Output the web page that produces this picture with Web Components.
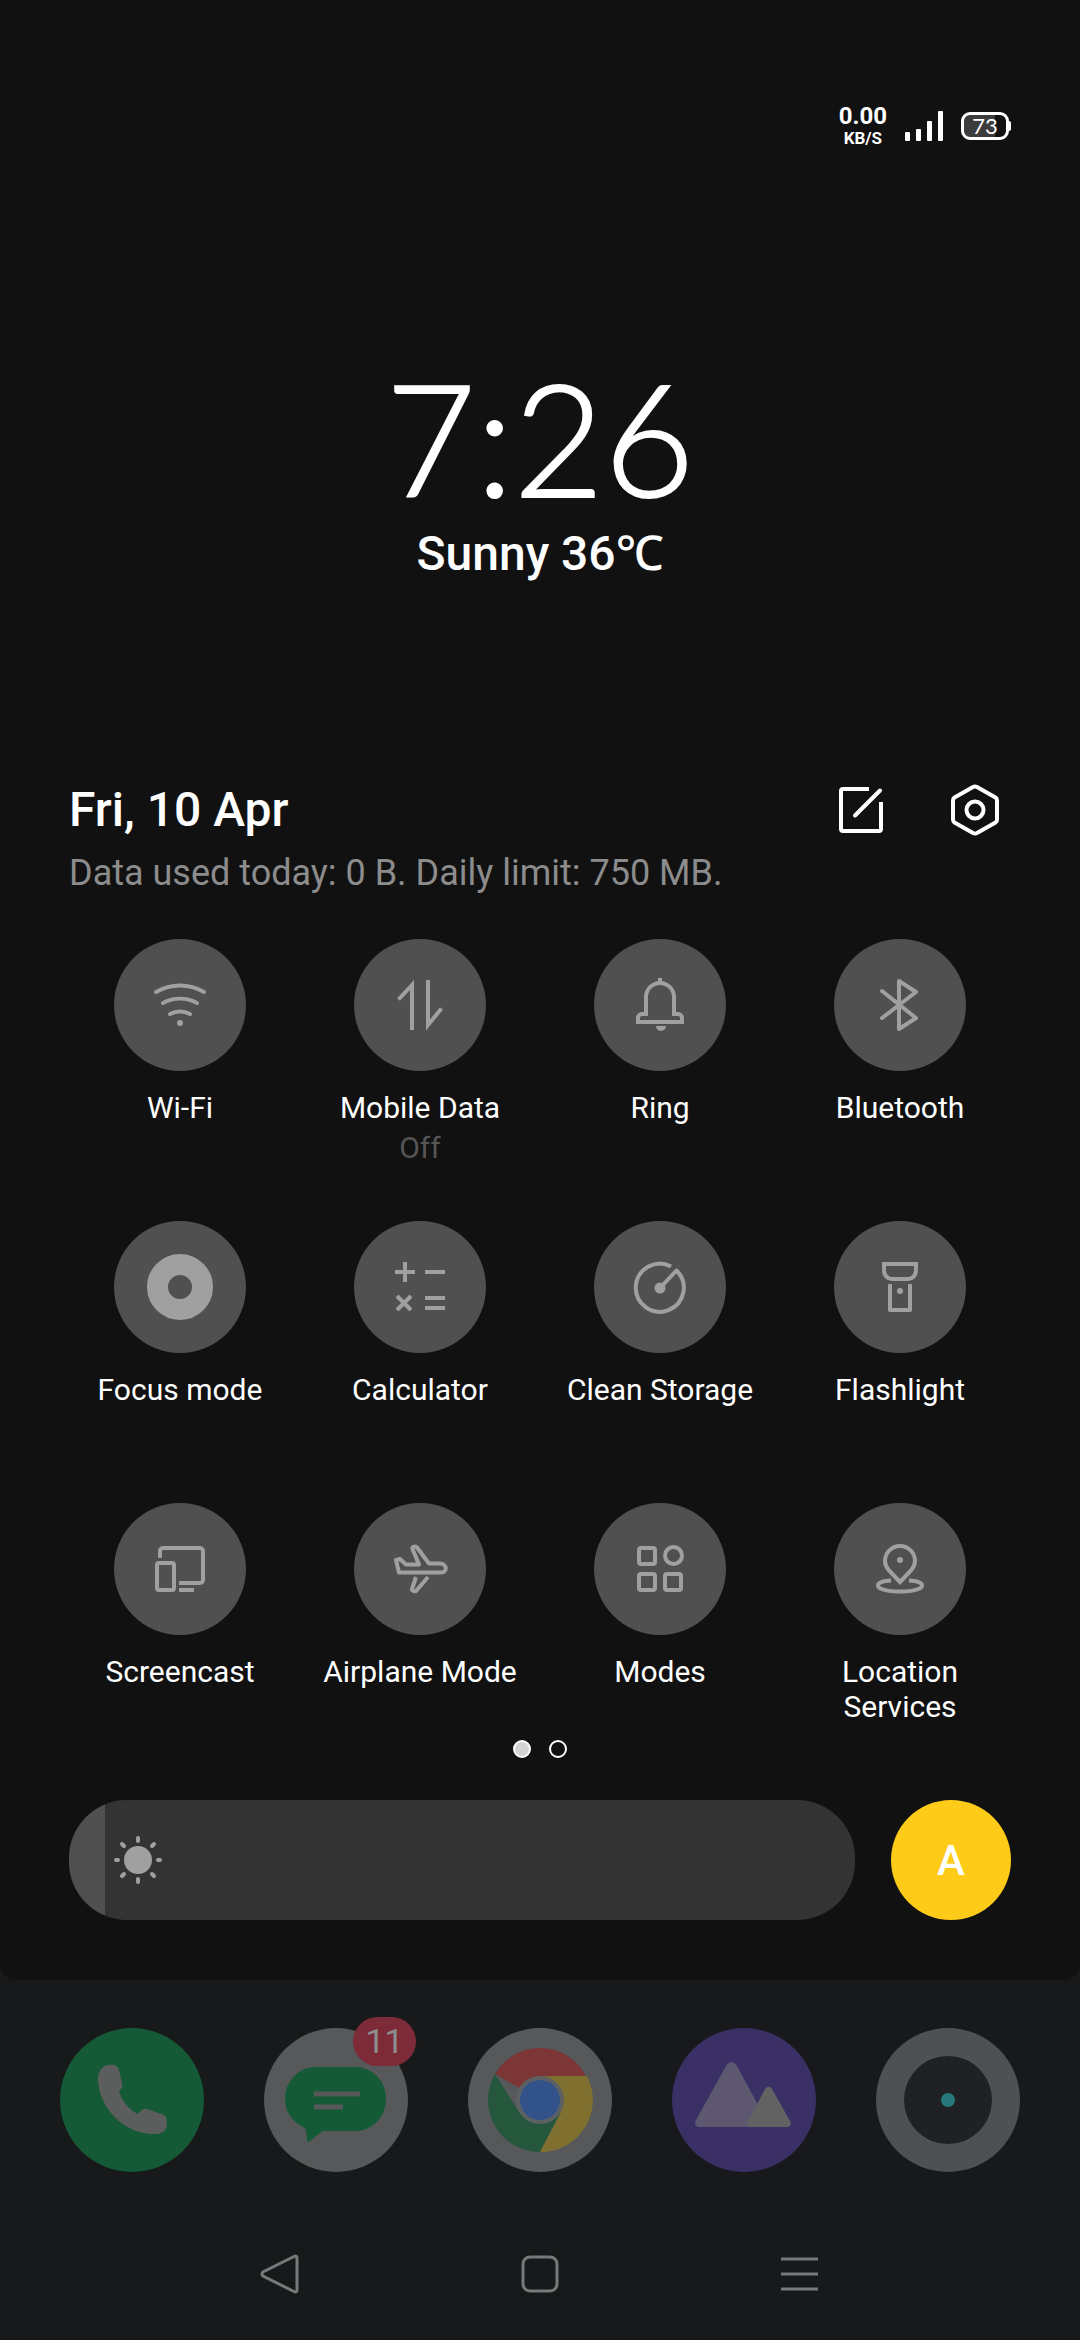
<!DOCTYPE html>
<html lang="en">
<head>
<meta charset="UTF-8">
<meta name="viewport" content="width=device-width, initial-scale=1">
<title>Quick settings</title>
<style>
  :root {
    --panel-bg: #111111;
    --home-bg: #17191a;
    --tile-bg: #505050;
    --tile-fg: #a0a0a0;
    --accent: #fdcb18;
    --edge: 69px;
  }
  body {
    margin: 0;
    min-height: 100vh;
    background: var(--home-bg);
    color: #fff;
    font-family: Roboto, "Noto Sans", sans-serif;
  }
</style>
</head>
<body>
<phone-shade>
  <status-bar speed="0.00" unit="KB/S" battery="73"></status-bar>
  <clock-weather time="7:26">Sunny 36℃</clock-weather>
  <shade-header date="Fri, 10 Apr">Data used today: 0 B. Daily limit: 750 MB.</shade-header>
  <tile-grid>
    <quick-tile icon="wifi">Wi-Fi</quick-tile>
    <quick-tile icon="data" state="Off">Mobile Data</quick-tile>
    <quick-tile icon="bell">Ring</quick-tile>
    <quick-tile icon="bluetooth">Bluetooth</quick-tile>
    <quick-tile icon="focus">Focus mode</quick-tile>
    <quick-tile icon="calculator">Calculator</quick-tile>
    <quick-tile icon="storage">Clean Storage</quick-tile>
    <quick-tile icon="flashlight">Flashlight</quick-tile>
    <quick-tile icon="screencast">Screencast</quick-tile>
    <quick-tile icon="airplane">Airplane Mode</quick-tile>
    <quick-tile icon="modes">Modes</quick-tile>
    <quick-tile icon="location">Location Services</quick-tile>
  </tile-grid>
  <page-dots count="2" current="0"></page-dots>
  <brightness-bar></brightness-bar>
</phone-shade>
<app-dock>
  <dock-app app="phone" name="Phone"></dock-app>
  <dock-app app="messages" name="Messages" badge="11"></dock-app>
  <dock-app app="chrome" name="Chrome"></dock-app>
  <dock-app app="photos" name="Photos"></dock-app>
  <dock-app app="camera" name="Camera"></dock-app>
</app-dock>
<nav-keys></nav-keys>

<script>
// quick tile icons, 64x64, stroked with the tile colour
const TILE_ICONS = {
  wifi: `
    <g stroke-linecap="round">
      <path d="M8 19a47 47 0 0 1 48 0"/>
      <path d="M15 30a37 37 0 0 1 34 0"/>
      <path d="M22 41a22 22 0 0 1 20 0"/>
    </g>
    <circle class="fill" cx="32" cy="50" r="3"/>`,
  data: `<path d="M24 57V12L10.500 26.500M40 7v45l13.500-16.500"/>`,
  bell: `
    <path d="M32 5v5M18 41V24a14 14 0 0 1 28 0v17h4a4 4 0 0 1 4 4v4H10v-4a4 4 0 0 1 4-4z"/>
    <path class="fill" d="M28 53h10a5 5 0 0 1-10 0z"/>`,
  bluetooth: `<path stroke-linecap="round" stroke-linejoin="round" d="M14 18l34 27-17 11V8l17 11-34 26"/>`,
  focus: `<circle cx="32" cy="32" r="22.500" stroke-width="21"/>`,
  calculator: `<path d="M7 17h20M17 7v20M37 17h20M9 41l14 14M23 41L9 55M37 43h20M37 53h20"/>`,
  storage: `
    <path stroke-linejoin="round" d="M32 33l16.500-17.500A24 24 0 1 1 43 11.500"/>
    <circle class="fill" cx="32" cy="33" r="5.500"/>`,
  flashlight: `
    <path d="M16 9h32v6c0 6-4 9-8 9H24c-4 0-8-3-8-9z"/>
    <path stroke-linejoin="round" d="M22 29v26h20V29"/>
    <circle class="fill" cx="32" cy="36" r="3"/>`,
  screencast: `
    <path d="M12 21v-7a3 3 0 0 1 3-3h37a3 3 0 0 1 3 3v29a3 3 0 0 1-3 3H31M31 53h15"/>
    <rect x="9" y="26" width="17" height="27" rx="2"/>`,
  airplane: `
    <g stroke-linejoin="round">
      <path d="M8 23l4-1 6 5.500h13L24.500 12c-.5-2.500 3-3.500 4.500-1.500L41 26.500h11c7 0 8 9 1 9H11z"/>
      <path d="M28 40l-4 12c-.6 2 3.400 3 4.500 1.500L40 40"/>
    </g>`,
  modes: `
    <rect x="11" y="11" width="16" height="16" rx="2"/>
    <circle cx="45.500" cy="18.500" r="8.500"/>
    <rect x="11" y="37" width="16" height="16" rx="2"/>
    <rect x="37" y="37" width="16" height="16" rx="2"/>`,
  location: `
    <path d="M32 45L21 33.500c-2.500-3-4-6-4-9.500a15 15 0 0 1 30 0c0 3.500-1.500 6.500-4 9.500z"/>
    <path d="M23 43.500C14 44 10 46 10 48.500c0 3.500 9 6 22 6s22-2.500 22-6c0-2.500-4-4.500-13-5"/>
    <circle class="fill" cx="32" cy="23" r="3"/>`
};

// dock icons, 144x144, already dimmed by the shade
const APP_ICONS = {
  phone: `
    <circle cx="72" cy="72" r="72" fill="#155a36"/>
    <path fill="#5c5d5d" d="M48 37c-6 1-10 7-10 14 1 30 27 56 58 55 7 0 11-4 11-11 0-5-1-8-6-9l-14-5c-4-1-6 1-9 5-9-4-16-13-19-23 3-2 4-5 3-8l-3-13c-1-5-6-6-11-5z"/>`,
  messages: `
    <circle cx="72" cy="72" r="72" fill="#56585a"/>
    <path fill="#155a36" d="M53 39h38a31 31 0 0 1 31 31v2a31 31 0 0 1-31 31H62c-3 0-4 0-6 2l-11 9c-1 0-2 0-2-2l-1-9c0-2-1-3-3-4a31 31 0 0 1-18-28v-1a31 31 0 0 1 32-31z"/>
    <path stroke="#56585a" stroke-width="5" d="M50 66h46M50 79h29"/>`,
  chrome: `
    <circle cx="72" cy="72" r="72" fill="#56585a"/>
    <path fill="#7c3635" d="M72 72L27 46a52 52 0 0 1 90 0v2H72z"/>
    <path fill="#24573c" d="M27 46a52 52 0 0 0 45 78l21-40-21-12-21 12z"/>
    <path fill="#80702f" d="M72 48h47a52 52 0 0 1-47 76l21-40z"/>
    <circle cx="72" cy="72" r="24" fill="#5d6062"/>
    <circle cx="72" cy="72" r="20" fill="#32538a"/>`,
  photos: `
    <circle cx="72" cy="72" r="72" fill="#3b3065"/>
    <path fill="#5d5870" d="M54 38c3-5 8-5 11 0l33 61H28c-4 0-6-3-4-7z"/>
    <path fill="#626263" d="M93 61c2-3 5-3 7 0l18 32c2 3 0 6-3 6H78c-4 0-4-3-2-6z"/>`,
  camera: `
    <circle cx="72" cy="72" r="72" fill="#4e5053"/>
    <circle cx="72" cy="72" r="44" fill="#1f2125"/>
    <circle cx="72" cy="72" r="7" fill="#28777c"/>`
};

class ShadeElement extends HTMLElement {
  constructor() {
    super();
    this.attachShadow({ mode: 'open' });
  }

  connectedCallback() {
    this.shadowRoot.innerHTML = `
      <style>
        * { box-sizing: border-box; }
        svg { display: block; fill: none; }
        button {
          margin: 0;
          padding: 0;
          border: 0;
          background: none;
          color: inherit;
          font: inherit;
          cursor: pointer;
        }
        ${this.styles()}
      </style>
      ${this.render()}
    `;
  }

  styles() { return ''; }
  render() { return '<slot></slot>'; }
}

customElements.define('phone-shade', class extends ShadeElement {
  styles() {
    return `
      :host {
        display: flex;
        flex-direction: column;
        padding-bottom: 60px;
        background: var(--panel-bg);
        border-radius: 0 0 16px 16px;
      }
    `;
  }
});

customElements.define('status-bar', class extends ShadeElement {
  styles() {
    return `
      :host {
        display: flex;
        justify-content: flex-end;
        align-items: center;
        gap: 18px;
        height: 40px;
        padding: 106px var(--edge) 0;
      }
      .speed { text-align: center; font-weight: 700; }
      .value { font-size: 24px; line-height: 24px; }
      .unit { font-size: 17px; line-height: 20px; }
      .signal { fill: #fff; }
      .battery {
        display: flex;
        align-items: center;
      }
      .level {
        width: 48px;
        height: 28px;
        border: 3px solid #fff;
        border-radius: 9px;
        background: linear-gradient(to right, #3c3c3c 73%, transparent 73%);
        font: 400 22px/22px Lato, sans-serif;
        text-align: center;
      }
      .tip {
        width: 2px;
        height: 10px;
        border-radius: 0 2px 2px 0;
        background: #fff;
      }
    `;
  }

  render() {
    return `
      <div class="speed">
        <div class="value">${this.getAttribute('speed')}</div>
        <div class="unit">${this.getAttribute('unit')}</div>
      </div>
      <svg class="signal" width="38" height="30" viewBox="0 0 38 30" aria-hidden="true">
        <rect y="21" width="5" height="9" rx="1"/>
        <rect x="11" y="18" width="5" height="12" rx="1"/>
        <rect x="22" y="10" width="5" height="20" rx="1"/>
        <rect x="33" width="5" height="30" rx="1"/>
      </svg>
      <div class="battery">
        <div class="level">${this.getAttribute('battery')}</div>
        <div class="tip"></div>
      </div>
    `;
  }
});

customElements.define('clock-weather', class extends ShadeElement {
  styles() {
    return `
      :host {
        display: flex;
        flex-direction: column;
        align-items: center;
        gap: 29px;
        padding-top: 231px;
      }
      time {
        font: 300 156px/120px Lato, sans-serif;
        -webkit-text-stroke: 2px currentColor;
      }
      div { font-size: 48px; font-weight: 500; line-height: 56px; }
    `;
  }

  render() {
    const time = this.getAttribute('time');
    return `<time>${time}</time><div><slot></slot></div>`;
  }
});

customElements.define('shade-header', class extends ShadeElement {
  styles() {
    return `
      :host {
        display: flex;
        flex-direction: column;
        gap: 14px;
        padding: 200px var(--edge) 45px;
      }
      .row { display: flex; align-items: center; height: 56px; gap: 42px; }
      h1 { flex: 1; margin: 0; font-size: 48px; font-weight: 500; line-height: 56px; }
      p { margin: 0; color: #8c8c8c; font-size: 36px; line-height: 42px; }
      button { display: grid; place-items: center; width: 72px; height: 56px; }
      svg { stroke: #fff; stroke-width: 4; stroke-linecap: round; stroke-linejoin: round; }
    `;
  }

  render() {
    return `
      <div class="row">
        <h1>${this.getAttribute('date')}</h1>
        <button aria-label="Edit tiles">
          <svg width="52" height="52" viewBox="0 0 52 52">
            <path stroke-linecap="butt" d="M34 5H8a2 2 0 0 0-2 2v38a2 2 0 0 0 2 2h36a2 2 0 0 0 2-2V18"/>
            <path d="M45 6.500L20 31.500"/>
          </svg>
        </button>
        <button aria-label="Settings">
          <svg width="52" height="52" viewBox="0 0 52 52">
            <path d="M24 3q2-1 4 0l18.500 10.500q1.500 1 1.500 3v19q0 2-1.500 3L28 49q-2 1-4 0L5.500 38.500q-1.500-1-1.500-3v-19q0-2 1.500-3z"/>
            <circle cx="26" cy="26" r="8.500"/>
          </svg>
        </button>
      </div>
      <p><slot></slot></p>
    `;
  }
});

customElements.define('tile-grid', class extends ShadeElement {
  styles() {
    return `
      :host {
        display: grid;
        grid-template-columns: repeat(4, 1fr);
        grid-auto-rows: minmax(227px, auto);
        row-gap: 55px;
        padding: 0 60px;
      }
    `;
  }
});

customElements.define('quick-tile', class extends ShadeElement {
  styles() {
    return `
      :host { display: flex; justify-content: center; align-items: flex-start; }
      button {
        display: flex;
        flex-direction: column;
        align-items: center;
        max-width: 210px;
        font-size: 30px;
        line-height: 35px;
      }
      .disc {
        display: grid;
        place-items: center;
        width: 132px;
        height: 132px;
        margin-bottom: 19px;
        border-radius: 50%;
        background: var(--tile-bg);
      }
      svg { overflow: visible; stroke: var(--tile-fg); stroke-width: 4; }
      .fill { fill: var(--tile-fg); stroke: none; }
      .state { margin-top: 5px; color: #555; }
    `;
  }

  render() {
    const state = this.getAttribute('state');
    return `
      <button>
        <span class="disc">
          <svg width="64" height="64" viewBox="0 0 64 64" aria-hidden="true">${TILE_ICONS[this.getAttribute('icon')]}</svg>
        </span>
        <span><slot></slot></span>
        ${state ? `<span class="state">${state}</span>` : ''}
      </button>
    `;
  }
});

customElements.define('page-dots', class extends ShadeElement {
  styles() {
    return `
      :host { display: flex; justify-content: center; gap: 18px; padding: 10px 0 42px; }
      i { width: 18px; height: 18px; border: 2px solid #fff; border-radius: 50%; }
      .on { background: #d4d4d4; }
    `;
  }

  render() {
    const count = Number(this.getAttribute('count'));
    const current = Number(this.getAttribute('current'));
    return Array.from({ length: count }, (_, i) => `<i class="${i === current ? 'on' : ''}"></i>`).join('');
  }
});

customElements.define('brightness-bar', class extends ShadeElement {
  styles() {
    return `
      :host { display: flex; gap: 36px; padding: 0 var(--edge); }
      label { position: relative; flex: 1; display: flex; }
      input {
        -webkit-appearance: none;
        appearance: none;
        width: 100%;
        height: 120px;
        margin: 0;
        border-radius: 58px;
        background: linear-gradient(to right, #505050 36px, #333 36px);
      }
      input::-webkit-slider-thumb { -webkit-appearance: none; width: 36px; height: 120px; }
      svg {
        position: absolute;
        left: 45px;
        top: 36px;
        stroke: var(--tile-fg);
        stroke-width: 4;
        stroke-linecap: round;
        pointer-events: none;
      }
      button {
        width: 120px;
        height: 120px;
        border-radius: 50%;
        background: var(--accent);
        font-size: 42px;
        font-weight: 500;
      }
    `;
  }

  render() {
    return `
      <label>
        <input type="range" min="0" max="100" value="0" aria-label="Brightness">
        <svg width="48" height="48" viewBox="0 0 48 48" aria-hidden="true">
          <circle cx="24" cy="24" r="12" fill="#a0a0a0"/>
          <path d="M24 2v3M24 43v3M2 24h2M44 24h2M8 8l2 2M38 38l2 2M8 40l2-2M38 10l2-2"/>
        </svg>
      </label>
      <button aria-label="Auto brightness">A</button>
    `;
  }
});

customElements.define('app-dock', class extends ShadeElement {
  styles() {
    return ':host { display: flex; justify-content: space-between; padding: 48px 60px 36px; }';
  }
});

customElements.define('dock-app', class extends ShadeElement {
  styles() {
    return `
      :host { display: block; position: relative; }
      button { display: block; }
      .badge {
        position: absolute;
        top: -11px;
        right: -8px;
        padding: 0 12px;
        min-width: 63px;
        border-radius: 25px;
        background: #7d2b39;
        color: #8d8d8d;
        font-size: 34px;
        line-height: 49px;
        text-align: center;
      }
    `;
  }

  render() {
    const badge = this.getAttribute('badge');
    return `
      <button aria-label="${this.getAttribute('name')}">
        <svg width="144" height="144" viewBox="0 0 144 144">${APP_ICONS[this.getAttribute('app')]}</svg>
        ${badge ? `<span class="badge">${badge}</span>` : ''}
      </button>
    `;
  }
});

customElements.define('nav-keys', class extends ShadeElement {
  styles() {
    return `
      :host { display: grid; grid-template-columns: repeat(3, 1fr); padding: 0 150px; }
      button { display: grid; place-items: center; height: 132px; }
      svg { stroke: #77797a; stroke-width: 3; }
    `;
  }

  render() {
    return `
      <button aria-label="Back">
        <svg width="40" height="40" viewBox="0 0 40 40"><path d="M34 2.500q3-1.500 3 2v31q0 3.500-3 2L3 22q-2-2 0-4z"/></svg>
      </button>
      <button aria-label="Home">
        <svg width="40" height="40" viewBox="0 0 40 40"><rect x="3" y="3" width="34" height="34" rx="7"/></svg>
      </button>
      <button aria-label="Recent apps">
        <svg width="40" height="40" viewBox="0 0 40 40"><path d="M1 5h37M1 20h37M1 35h37"/></svg>
      </button>
    `;
  }
});
</script>
</body>
</html>
